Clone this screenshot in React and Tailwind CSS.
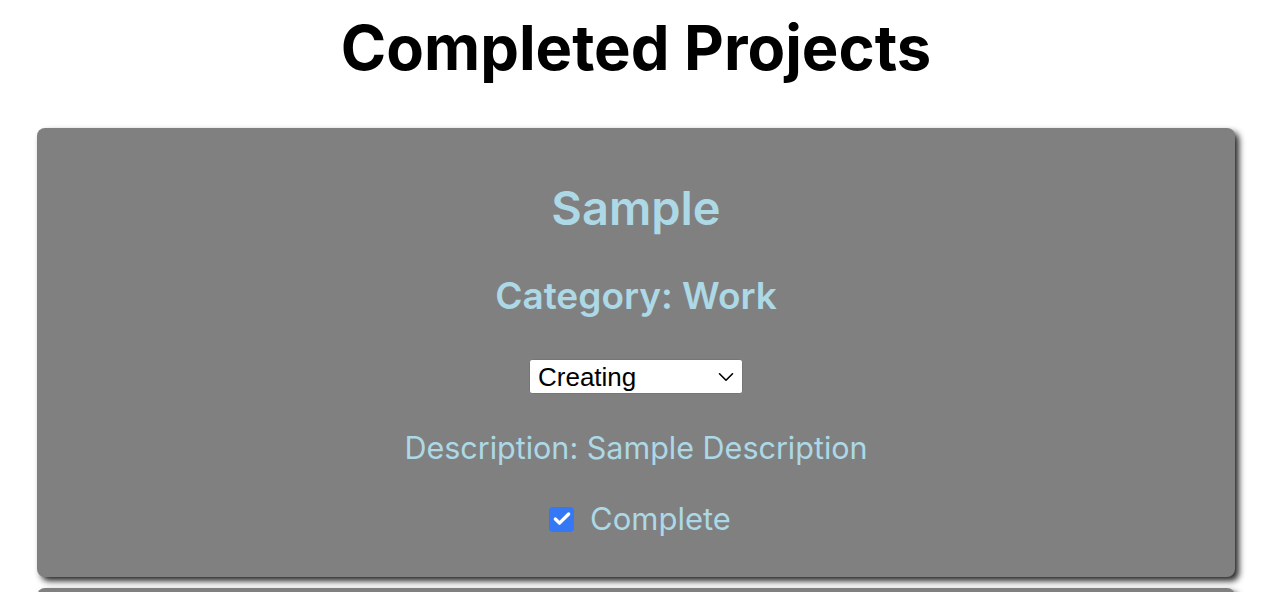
import { Check, ChevronDown } from 'lucide-react';

const projects = [
  { title: 'Sample', category: 'Work', status: 'Creating', description: 'Sample Description', complete: true },
  { title: 'Sample', category: 'Work', status: 'Creating', description: 'Sample Description', complete: true },
];

function ProjectCard({ p }) {
  return (
    <div className="mx-[37px] mb-[11px] flex flex-col items-center rounded-lg bg-[#808080] pt-[40px] pb-[38px] text-[#add8e6] shadow-[4px_4px_6px_rgba(0,0,0,0.85)]">
      <h2 className="text-[47px] font-semibold leading-[80px]">{p.title}</h2>
      <h3 className="mt-[8px] text-[37px] font-semibold leading-[80px]">Category: {p.category}</h3>
      <div className="mt-[23px] flex h-[35px] w-[214px] items-center justify-between rounded-[3px] border border-[#767676] bg-white pl-[8px] pr-[3px] text-black">
        <span className="text-[26px] leading-none font-['Liberation_Sans',Arial,sans-serif]">{p.status}</span>
        <ChevronDown size={26} strokeWidth={1.5} />
      </div>
      <p className="mt-[34px] text-[30.5px] leading-[40px]">Description: {p.description}</p>
      <label className="mt-[31px] ml-[8px] flex items-center gap-[16px] text-[31px] leading-[40px]">
        <span className="flex h-[25px] w-[25px] items-center justify-center rounded-[4px] bg-[#3478f6]">
          <Check size={20} strokeWidth={4} className="text-white" />
        </span>
        Complete
      </label>
    </div>
  );
}

export default function App() {
  return (
    <div className="min-h-screen bg-white font-['Inter',sans-serif]">
      <h1 className="pt-[14px] pb-[46px] text-center text-[61.5px] leading-[68px] font-bold text-black">Completed Projects</h1>
      {projects.map((p, i) => (
        <ProjectCard key={i} p={p} />
      ))}
    </div>
  );
}
